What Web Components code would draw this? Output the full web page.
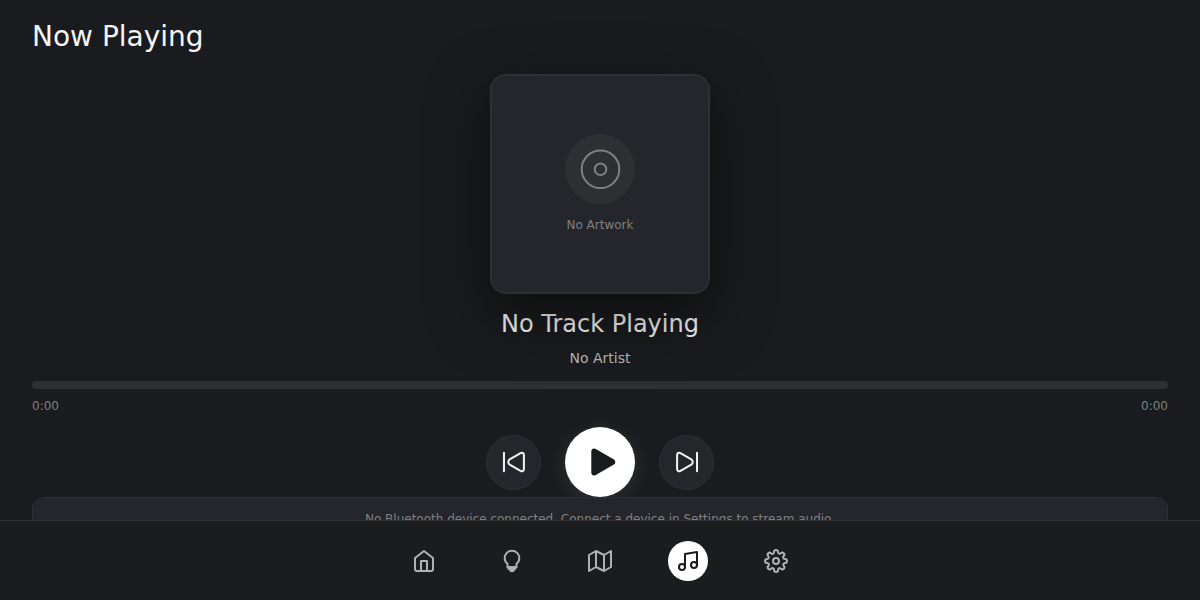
<!DOCTYPE html>
<html lang="en">
<head>
<meta charset="utf-8">
<title>Now Playing</title>
<style>
html,body{margin:0;height:100%;overflow:hidden;background:#1a1b1e;font-family:"DejaVu Sans",sans-serif}
</style>
</head>
<body>
<media-app></media-app>
<script>
const define = (name, html) => {
  const t = document.createElement('template');
  t.innerHTML = html;
  customElements.define(name, class extends HTMLElement {
    constructor() {
      super();
      this.attachShadow({mode: 'open'}).append(t.content.cloneNode(true));
    }
  });
};

const ICONS = {
  home: '<path d="M3 9l9-7 9 7v11a2 2 0 0 1-2 2H5a2 2 0 0 1-2-2z"/><path d="M9 22V12h6v10"/>',
  bulb: '<path d="M7.500 18.500v-3.800C5.500 13.300 4.700 11.300 4.700 9a7.300 7.300 0 0 1 14.600 0c0 2.300-.8 4.300-2.800 5.700v3.800z"/><path d="M8.500 17.500h7V20.500h-1.500v2h-4v-2H8.500z" fill="currentColor" stroke-width="1"/>',
  map: '<path d="M1 6v16l7-4 8 4 7-4V2l-7 4-8-4-7 4zM8 2v16M16 6v16"/>',
  music: '<path d="M9 18V5l12-2v13"/><circle cx="6" cy="18" r="3"/><circle cx="18" cy="16" r="3"/>',
  gear: '<circle cx="12" cy="12" r="3"/><path d="M19.400 15a1.650 1.650 0 0 0 .330 1.820l.060.060a2 2 0 0 1-2.830 2.830l-.060-.060a1.650 1.650 0 0 0-2.820 1.170V21a2 2 0 0 1-4 0v-.090A1.650 1.650 0 0 0 7.180 19.730l-.060.060a2 2 0 0 1-2.830-2.830l.060-.060A1.650 1.650 0 0 0 3.180 14H3a2 2 0 0 1 0-4h.090A1.650 1.650 0 0 0 4.270 7.180l-.060-.060a2 2 0 0 1 2.830-2.830l.060.060A1.650 1.650 0 0 0 10 3.180V3a2 2 0 0 1 4 0v.090a1.650 1.650 0 0 0 2.820 1.180l.060-.060a2 2 0 0 1 2.830 2.830l-.060.060A1.650 1.650 0 0 0 20.820 10H21a2 2 0 0 1 0 4h-.090a1.650 1.650 0 0 0-1.510 1z"/>',
  disc: '<circle cx="12.250" cy="12.150" r="9.400"/><circle cx="12.250" cy="12.150" r="2.900"/>',
  prev: '<path d="M3.400 4.100v15.800M20.500 6v12c0 1.700-1.500 2.400-2.900 1.600L8.300 14.300c-1.600-1-1.600-3.600 0-4.600l9.300-5.300c1.400-.8 2.900-.1 2.900 1.600z"/>',
  next: '<path d="M20.600 4.100v15.800M3.500 6v12c0 1.700 1.500 2.400 2.900 1.600l9.300-5.300c1.600-1 1.600-3.600 0-4.600L6.400 4.400C5 3.600 3.500 4.300 3.500 6z"/>',
  play: '<path d="M6.200 5v14c0 1.700 1.500 2.600 3 1.700l11.800-6.800c1.600-.9 1.600-2.900 0-3.800L9.200 3.300C7.700 2.400 6.200 3.300 6.200 5z" fill="currentColor" stroke="none"/>'
};

customElements.define('app-icon', class extends HTMLElement {
  connectedCallback() {
    const size = this.getAttribute('size') || 24;
    const weight = this.getAttribute('weight') || 2;
    this.attachShadow({mode: 'open'}).innerHTML =
      `<style>:host{display:block;flex:none;width:${size}px;height:${size}px}svg{display:block}</style>
       <svg width="${size}" height="${size}" viewBox="0 0 24 24" fill="none" stroke="currentColor" stroke-width="${weight}" stroke-linecap="round" stroke-linejoin="round">${ICONS[this.getAttribute('name')]}</svg>`;
  }
});

define('album-art', `<style>
:host{position:relative;box-sizing:border-box;width:220px;height:220px;flex:none;display:flex;flex-direction:column;align-items:center;justify-content:center;gap:12px;border:2px solid #2e2f34;border-radius:16px;background:#25262b;box-shadow:0 20px 60px rgba(0,0,0,.5);color:#808080;font-size:12px;line-height:18px}
.disc{width:70px;height:70px;border-radius:50%;background:#2e2f33;display:flex;align-items:center;justify-content:center}
</style><div class="disc"><app-icon name="disc" size="48" weight="1"></app-icon></div><slot></slot>`);

define('round-button', `<style>
:host{box-sizing:border-box;width:55px;height:55px;border-radius:50%;display:flex;align-items:center;justify-content:center;background:#25262b;border:1px solid #2e2f33;color:#f0f0f0}
:host([primary]){width:70px;height:70px;background:#fff;border:0;color:#1a1b1e;box-shadow:0 4px 20px rgba(255,255,255,.1)}
</style><slot></slot>`);

define('progress-track', `<style>
:host{display:block;width:100%;color:#808080;font-size:12px;line-height:18px}
.bar{height:8px;border-radius:4px;background:#2e2f33}
.times{display:flex;justify-content:space-between;margin-top:8px}
</style><div class="bar"></div><div class="times"><slot name="elapsed"></slot><slot name="total"></slot></div>`);

define('device-notice', `<style>
:host{position:relative;display:block;box-sizing:border-box;width:100%;height:46px;padding:12px 16px;border:1px solid #2e2f33;border-radius:12px;background:#25262b;color:#808080;font-size:12px;line-height:18px;text-align:center}
</style><slot></slot>`);

define('nav-item', `<style>
:host{width:40px;height:40px;border-radius:50%;display:flex;align-items:center;justify-content:center;color:#b0b0b0}
:host([active]){background:#fff;color:#1a1b1e}
</style><slot></slot>`);

define('nav-bar', `<style>
:host{box-sizing:border-box;flex:none;height:80px;display:flex;align-items:center;justify-content:center;gap:48px;border-top:1px solid #2e2f33;background:#1b1c1e}
</style><slot></slot>`);

define('media-app', `<style>
:host{height:600px;display:flex;flex-direction:column;background:#1a1b1e;color:#f5f5f5}
main{flex:1;min-height:0;overflow:hidden;padding:16px 32px 0}
h1{margin:0 0 16px;font-size:28px;font-weight:400;line-height:42px}
.player{display:flex;flex-direction:column;align-items:center}
h2{margin:12px 0 0;font-size:24px;line-height:36px;font-weight:400;color:#f5f5f5}
.artist{margin:6px 0 12px;font-size:14px;line-height:21px;color:#b5b5b5}
.controls{display:flex;align-items:center;gap:24px;margin-top:12px}
</style>
<main>
<h1>Now Playing</h1>
<section class="player">
<album-art>No Artwork</album-art>
<h2>No Track Playing</h2>
<div class="artist">No Artist</div>
<progress-track><span slot="elapsed">0:00</span><span slot="total">0:00</span></progress-track>
<div class="controls">
<round-button><app-icon name="prev" size="28" weight="1.750"></app-icon></round-button>
<round-button primary><app-icon name="play" size="36"></app-icon></round-button>
<round-button><app-icon name="next" size="28" weight="1.750"></app-icon></round-button>
</div>
<device-notice>No Bluetooth device connected. Connect a device in Settings to stream audio.</device-notice>
</section>
</main>
<nav-bar>
<nav-item><app-icon name="home"></app-icon></nav-item>
<nav-item><app-icon name="bulb"></app-icon></nav-item>
<nav-item><app-icon name="map"></app-icon></nav-item>
<nav-item active><app-icon name="music"></app-icon></nav-item>
<nav-item><app-icon name="gear"></app-icon></nav-item>
</nav-bar>`);
</script>
</body>
</html>
